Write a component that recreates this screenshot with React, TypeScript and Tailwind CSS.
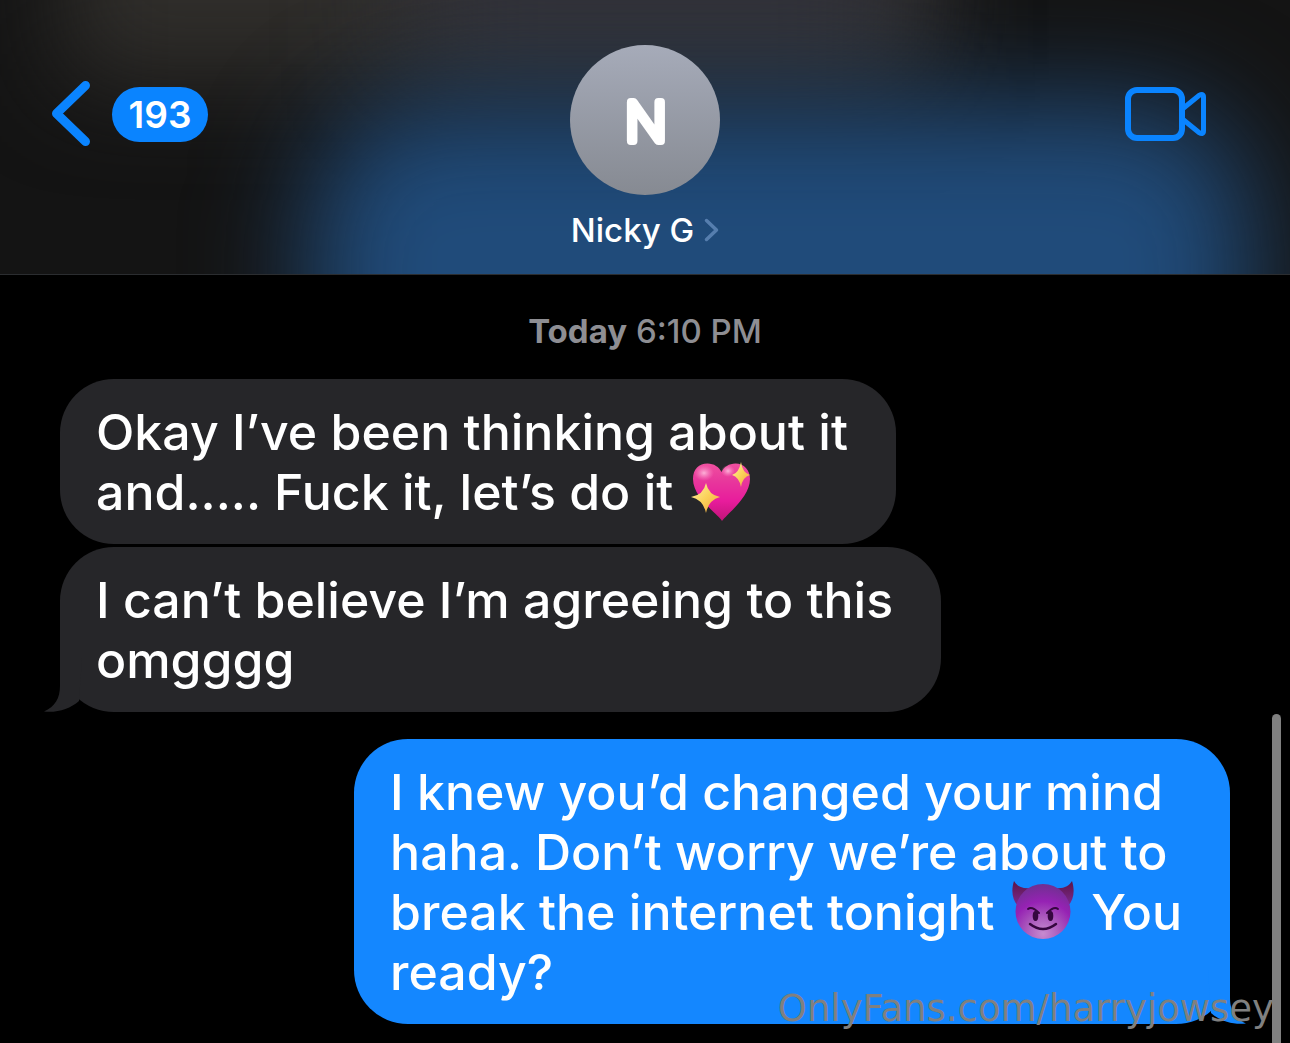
import { useId } from "react";

type Message = {
  from: "them" | "me";
  lines: React.ReactNode[];
  tail?: boolean;
};

function SparklingHeart() {
  const id = useId();
  return (
    <svg role="img" aria-label="sparkling heart" viewBox="0 0 60 60" className="inline-block w-15 h-15 mx-1 -mt-2 align-[-12px]">
      <defs>
        <linearGradient id={id} x1="0" y1="0" x2="0" y2="1">
          <stop offset="0" stopColor="#f0509f" />
          <stop offset="0.3" stopColor="#e8389c" />
          <stop offset="0.65" stopColor="#e81c9c" />
          <stop offset="1" stopColor="#c01478" />
        </linearGradient>
        <linearGradient id={`${id}s`} x1="0" y1="0" x2="1" y2="1">
          <stop offset="0" stopColor="#fff0a8" />
          <stop offset="0.5" stopColor="#fbd25a" />
          <stop offset="1" stopColor="#f2a03a" />
        </linearGradient>
        <radialGradient id={`${id}g`}>
          <stop offset="0" stopColor="#ffc4e2" stopOpacity="0.85" />
          <stop offset="1" stopColor="#ff8cc8" stopOpacity="0" />
        </radialGradient>
      </defs>
      <path
        d="M31 59C27 52 2 36 2 17C2 7 8 1.500 16.500 1.500C23 1.500 28 5 30.500 10C33 5 38 1.500 44.500 1.500C53 1.500 59 8 59 17C59 35 37 51 31 59Z"
        fill={`url(#${id})`}
      />
      <ellipse cx="13" cy="11" rx="10" ry="8" fill={`url(#${id}g)`} />
      <ellipse cx="37" cy="9" rx="7" ry="6" fill={`url(#${id}g)`} />
      <path d="M15 21Q17.500 33 29 35Q17.500 38 15 51Q12.500 38 0 35Q12.500 33 15 21Z" fill={`url(#${id}s)`} />
      <path d="M50 0Q51.500 11 59 13Q51.500 15 50 25Q48 15 41 13Q48 11 50 0Z" fill={`url(#${id}s)`} />
    </svg>
  );
}

function SmilingImp() {
  const id = useId();
  return (
    <svg role="img" aria-label="smiling face with horns" viewBox="0 0 62 60" className="inline-block w-[62px] h-15 mx-1 -mt-2 align-[-10px]">
      <defs>
        <radialGradient id={id} cx="0.5" cy="0.9" r="0.9">
          <stop offset="0" stopColor="#c78bd0" />
          <stop offset="0.35" stopColor="#aa58bc" />
          <stop offset="0.65" stopColor="#9622b4" />
          <stop offset="1" stopColor="#6f3090" />
        </radialGradient>
        <linearGradient id={`${id}h`} x1="0" y1="0" x2="0" y2="1">
          <stop offset="0" stopColor="#5c1446" />
          <stop offset="1" stopColor="#7e2a92" />
        </linearGradient>
      </defs>
      <path d="M2 1C-1 10 0 20 6 26L19 8C10 9 5 6 2 1Z" fill={`url(#${id}h)`} />
      <path d="M60 1C63 10 62 20 56 26L43 8C52 9 57 6 60 1Z" fill={`url(#${id}h)`} />
      <circle cx="31" cy="31.500" r="27.500" fill={`url(#${id})`} />
      <g fill="none" stroke="#35073f" strokeLinecap="round">
        <path d="M16 29Q20 26 27 33" strokeWidth="2" />
        <path d="M46 29Q42 26 35 33" strokeWidth="2" />
        <path d="M18 44Q31 54 44 44" strokeWidth="2.500" />
      </g>
      <ellipse cx="23.500" cy="36" rx="2.800" ry="5" fill="#35073f" />
      <ellipse cx="38.500" cy="36" rx="2.800" ry="5" fill="#35073f" />
    </svg>
  );
}

const MESSAGES: Message[] = [
  {
    from: "them",
    lines: ["Okay I’ve been thinking about it", <>and..... Fuck it, let’s do it <SparklingHeart /></>],
  },
  {
    from: "them",
    lines: ["I can’t believe I’m agreeing to this", "omgggg"],
    tail: true,
  },
  {
    from: "me",
    lines: [
      "I knew you’d changed your mind",
      "haha. Don’t worry we’re about to",
      <>break the internet tonight <SmilingImp /> You</>,
      "ready?",
    ],
    tail: true,
  },
];

function Bubble({ from, lines, tail }: Message) {
  const mine = from === "me";
  return (
    <li
      className={`relative w-fit rounded-[54px] pl-9 pr-12 pt-[23px] pb-[22px] text-[50px] leading-[60px] font-medium text-white whitespace-nowrap ${
        mine ? "self-end mt-6 bg-[#1487ff]" : "self-start bg-[#262629]"
      }`}
    >
      {lines.map((line, i) => (
        <p key={i} className="h-15">{line}</p>
      ))}
      {tail && (
        <svg
          viewBox="0 0 40 54"
          aria-hidden="true"
          className={`absolute bottom-0 w-10 h-[54px] ${
            mine ? "-right-4 -scale-x-100 text-[#1487ff]" : "-left-4 text-[#262629]"
          }`}
        >
          <path d="M16 0V28C16 40 11 49 0 53.500C13 55 26 51 35 43L38 0Z" fill="currentColor" />
        </svg>
      )}
    </li>
  );
}

function Header() {
  return (
    <header className="relative overflow-hidden border-b border-[#2b2d30] bg-[#141414]">
      {/* blurred wallpaper behind the bar */}
      <div aria-hidden="true" className="absolute inset-0">
        <div className="absolute -top-40 left-[5%] right-[28%] h-60 bg-[#302e2b] blur-[50px]" />
        <div className="absolute -top-40 left-[32%] right-[30%] h-56 bg-[#32323a] blur-[60px]" />
        <div className="absolute top-[104px] -bottom-40 left-[24%] right-[3%] rounded-[120px] bg-[#204b7a] blur-[56px]" />
      </div>

      <div className="relative grid grid-cols-[1fr_auto_1fr] items-start pt-[45px] pb-6">
        <button aria-label="Back, 193 unread" className="mt-9 ml-12 flex w-fit items-center gap-5">
          <svg viewBox="0 0 44 66" fill="none" className="w-11 h-[66px]" aria-hidden="true">
            <path d="M37.500 4.500L8.500 32.500L37.500 60.500" stroke="#0a84ff" strokeWidth="9" strokeLinecap="round" strokeLinejoin="round" />
          </svg>
          <span className="flex h-[55px] w-24 items-center justify-center rounded-full bg-[#0a84ff] text-[37px] leading-none font-semibold text-white">
            193
          </span>
        </button>

        <button className="flex flex-col items-center">
          <span className="size-[150px] rounded-full bg-linear-to-b from-[#a6abb9] to-[#868a92]">
            <svg viewBox="0 0 150 150" className="size-full" aria-hidden="true">
              <text
                x="76"
                y="96"
                textAnchor="middle"
                fontSize="54"
                fill="#fff"
                stroke="#fff"
                strokeWidth="8"
                strokeLinejoin="round"
                className="font-extralight"
              >
                N
              </text>
            </svg>
          </span>
          <span className="mt-[15px] flex items-center gap-2.5 text-[33px] leading-10 font-medium text-white">
            Nicky G
            <svg viewBox="0 0 15 24" fill="none" className="w-[15px] h-6" aria-hidden="true">
              <path d="M2.500 2.500L12.500 12L2.500 21.500" stroke="#567eae" strokeWidth="3.500" strokeLinecap="round" strokeLinejoin="round" />
            </svg>
          </span>
        </button>

        <button aria-label="FaceTime video" className="mt-[41px] mr-[83px] justify-self-end">
          <svg viewBox="0 0 83 56" fill="none" stroke="#0a84ff" strokeLinejoin="round" className="w-[83px] h-14" aria-hidden="true">
            <rect x="4" y="4" width="54" height="48" rx="9" strokeWidth="6" />
            <path d="M59 22.500L75 9.500Q79.500 7 79.500 11V45Q79.500 49 75 46.500L59 33.500" strokeWidth="5" />
          </svg>
        </button>
      </div>
    </header>
  );
}

export default function App() {
  return (
    <div className="relative min-h-screen overflow-hidden bg-black font-['Inter',sans-serif]">
      <Header />

      <main className="px-15 pt-9">
        <p className="text-center text-[33px] leading-10 font-medium text-[#8e8e93]">
          <span className="font-bold">Today</span> 6:10 PM
        </p>
        <ul className="mt-7 flex flex-col gap-[3px]">
          {MESSAGES.map((message, i) => (
            <Bubble key={i} {...message} />
          ))}
        </ul>
      </main>

      <p className="absolute right-4 bottom-[11px] font-['DejaVu_Sans',sans-serif] text-[37px] leading-[46px] text-[#808080]">
        OnlyFans.com/harryjowsey
      </p>
      <div aria-hidden="true" className="absolute top-[714px] right-[9px] -bottom-2 w-[9px] rounded-full bg-[#808080]" />
    </div>
  );
}
